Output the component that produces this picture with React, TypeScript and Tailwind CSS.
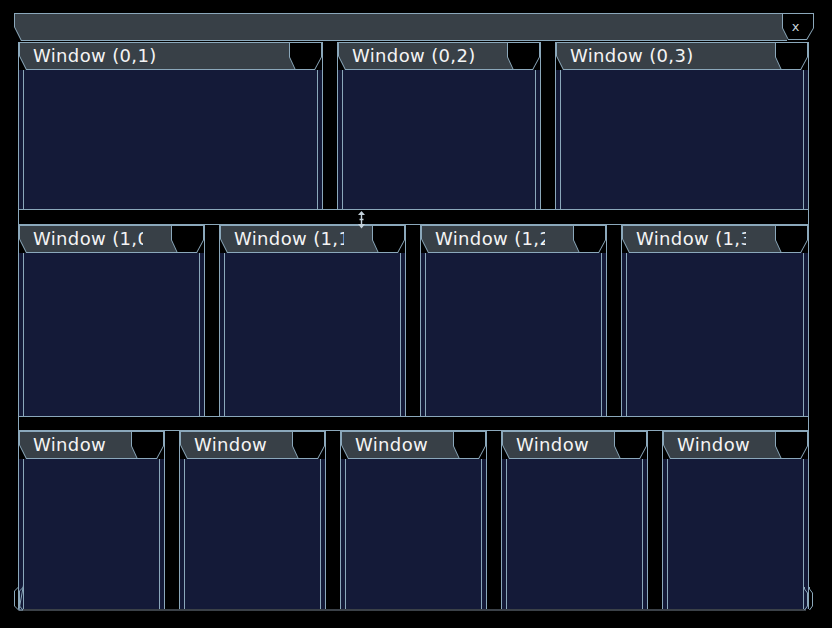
import React from 'react';

// frame colours
const EDGE = 'bg-[#8ba8bb]';

function TitleBar({ children, right }: { children?: React.ReactNode; right: string }) {
  return (
    <div className={`absolute inset-y-0 left-0 ${right} ${EDGE} [clip-path:polygon(0_0,100%_0,100%_100%,7px_100%,0_14px)]`}>
      <div className="absolute bottom-[1px] left-[1px] right-0 top-[1px] flex items-center bg-[#384047] pl-[13px] [clip-path:polygon(0_0,100%_0,100%_100%,6.6px_100%,0_13px)]">
        {children}
      </div>
    </div>
  );
}

function Knob({ children, w }: { children?: React.ReactNode; w: string }) {
  return (
    <div className={`absolute right-0 top-0 h-full ${w} ${EDGE} [clip-path:polygon(0_0,100%_0,100%_15px,calc(100%_-_7px)_100%,6px_100%,0_15px)]`}>
      <div className="absolute inset-[1px] flex items-center justify-center bg-black [clip-path:polygon(0_0,100%_0,100%_14px,calc(100%_-_6.5px)_100%,5.5px_100%,0_14px)]">
        {children}
      </div>
    </div>
  );
}

function Win({ title, w, clip }: { title: string; w: string; clip: string }) {
  return (
    <div className={`${w} flex h-full shrink-0 flex-col border-x border-[#8ba8bb] bg-black`}>
      <div className="relative h-[28px] shrink-0">
        <TitleBar right="right-[27px]">
          <div className={`${clip} overflow-hidden whitespace-nowrap text-[18px] leading-[22px] tracking-[0.35px] text-[#f4f4f4]`}>
            {title}
          </div>
        </TitleBar>
        <Knob w="w-[33px]" />
      </div>
      <div className="flex-1 bg-[#141a38] px-[4px]">
        <div className="h-full border-x border-[#8ba8bb]" />
      </div>
    </div>
  );
}

const Gap = () => <div className="w-[14px] shrink-0 bg-black" />;

export default function App() {
  return (
    <div className="relative h-[628px] w-[832px] overflow-hidden bg-black pl-[14px] pt-[13px] font-['DejaVu_Sans',sans-serif]">
      <div className="flex w-[800px] flex-col">
        <div className="relative h-[28px]">
          <TitleBar right="right-[27px]" />
          <div className="absolute right-0 top-0 h-[27px] w-[32px]">
            <Knob w="w-[32px]">
              <span className="-ml-[5px] -mt-[1px] text-[13px] leading-none text-[#c9d3db]">x</span>
            </Knob>
          </div>
        </div>
        <div className="ml-[4px] mt-[1px] flex w-[791px] flex-col">
          <div className="flex h-[167px]">
            <Win title="Window (0,1)" w="w-[305px]" clip="w-[230px]" />
            <Gap />
            <Win title="Window (0,2)" w="w-[204px]" clip="w-[130px]" />
            <Gap />
            <Win title="Window (0,3)" w="w-[254px]" clip="w-[180px]" />
          </div>
          <div className="h-[16px] border border-[#8ba8bb] bg-black" />
          <div className="flex h-[191px]">
            <Win title="Window (1,0)" w="w-[187px]" clip="w-[110px]" />
            <Gap />
            <Win title="Window (1,1)" w="w-[187px]" clip="w-[110px]" />
            <Gap />
            <Win title="Window (1,2)" w="w-[187px]" clip="w-[110px]" />
            <Gap />
            <Win title="Window (1,3)" w="w-[188px]" clip="w-[110px]" />
          </div>
          <div className="h-[15px] border border-[#8ba8bb] bg-black" />
          <div className="flex h-[178px]">
            <Win title="Window (2,0)" w="w-[147px]" clip="w-[73px]" />
            <Gap />
            <Win title="Window (2,1)" w="w-[147px]" clip="w-[73px]" />
            <Gap />
            <Win title="Window (2,2)" w="w-[147px]" clip="w-[73px]" />
            <Gap />
            <Win title="Window (2,3)" w="w-[147px]" clip="w-[73px]" />
            <Gap />
            <Win title="Window (2,4)" w="w-[147px]" clip="w-[73px]" />
          </div>
          <div className="mr-[3px] h-[2px] bg-[#3b4148]" />
        </div>
      </div>

      {/* resize grips at the lower corners */}
      <svg className="absolute left-[13px] top-[585px]" width="12" height="27" viewBox="0 0 12 27">
        <path d="M5.5 0 V2 L1.5 6 V21 L5.5 25" fill="none" stroke="#8ba8bb" strokeWidth="1" />
        <path d="M10.5 0 V2 L6.5 6 V21 L10 25 H6 Z" fill="#141a38" stroke="#8ba8bb" strokeWidth="1" />
      </svg>
      <svg className="absolute left-[802px] top-[587px]" width="12" height="25" viewBox="0 0 12 25">
        <path d="M7.5 0 V2 L10.5 6 V19 L7.5 23" fill="none" stroke="#8ba8bb" strokeWidth="1" />
        <path d="M2.5 0 V2 L5.5 6 V19 L2.5 23" fill="none" stroke="#8ba8bb" strokeWidth="1" />
      </svg>

      {/* mouse cursor: vertical resize */}
      <svg className="absolute left-[356px] top-[210px]" width="11" height="20" viewBox="0 0 11 20">
        <path d="M5.5 1 L2 5 H9 Z M2 14 H9 L5.5 18.5 Z" fill="#c4d2dc" />
        <path d="M5.5 4 V15 M3.5 9.5 H7.5" stroke="#c4d2dc" strokeWidth="1.4" />
      </svg>
    </div>
  );
}
